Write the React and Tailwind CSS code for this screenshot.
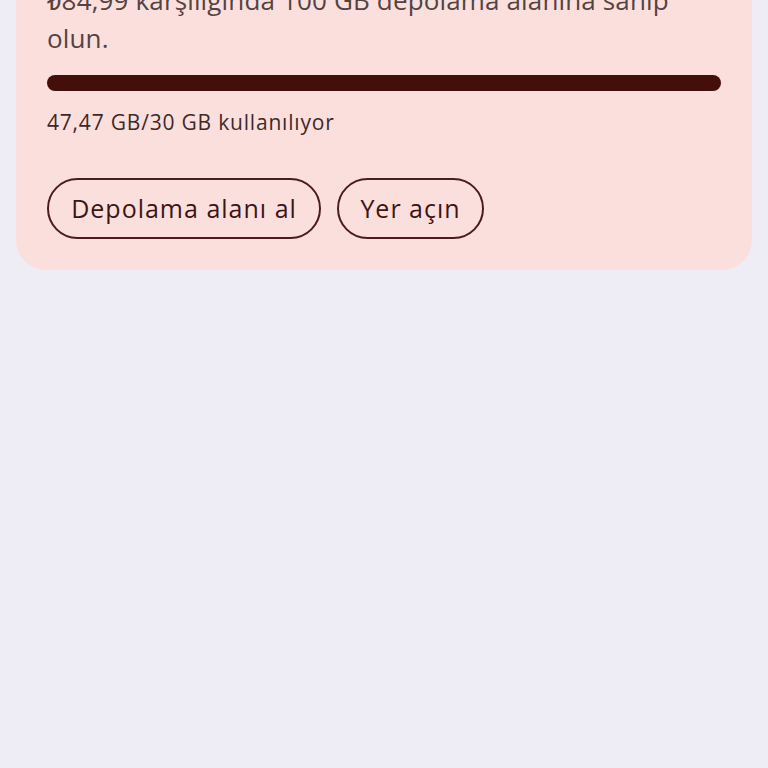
export default function App() {
  return (
    <div className="w-[768px] h-[768px] overflow-hidden bg-[#eeedf6]" style={{ fontFamily: '"Open Sans", Roboto, sans-serif' }}>
      <div className="mx-4 mt-[-19px] rounded-b-[30px] bg-[#fbdfdc] px-[31px] pb-[31px]">
        <p className="text-[26px] leading-[38px] tracking-[0.15px] text-[#534343]">
          ₺84,99 karşılığında 100 GB depolama alanına sahip
          <br />
          olun.
        </p>
        <div className="mt-[18px] h-4 w-full rounded-full bg-[#440e0b]" />
        <p className="mt-[17px] text-[21px] leading-[28px] tracking-[0.8px] text-[#3c2a2a]">47,47 GB/30 GB kullanılıyor</p>
        <div className="mt-[42px] flex gap-4">
          <button className="h-[61px] w-[274px] rounded-full border-2 border-[#4a1d1c] text-[25px] tracking-[1px] text-[#3c1514]">
            Depolama alanı al
          </button>
          <button className="h-[61px] w-[147px] rounded-full border-2 border-[#4a1d1c] text-[25px] tracking-[1px] text-[#3c1514]">
            Yer açın
          </button>
        </div>
      </div>
    </div>
  );
}
